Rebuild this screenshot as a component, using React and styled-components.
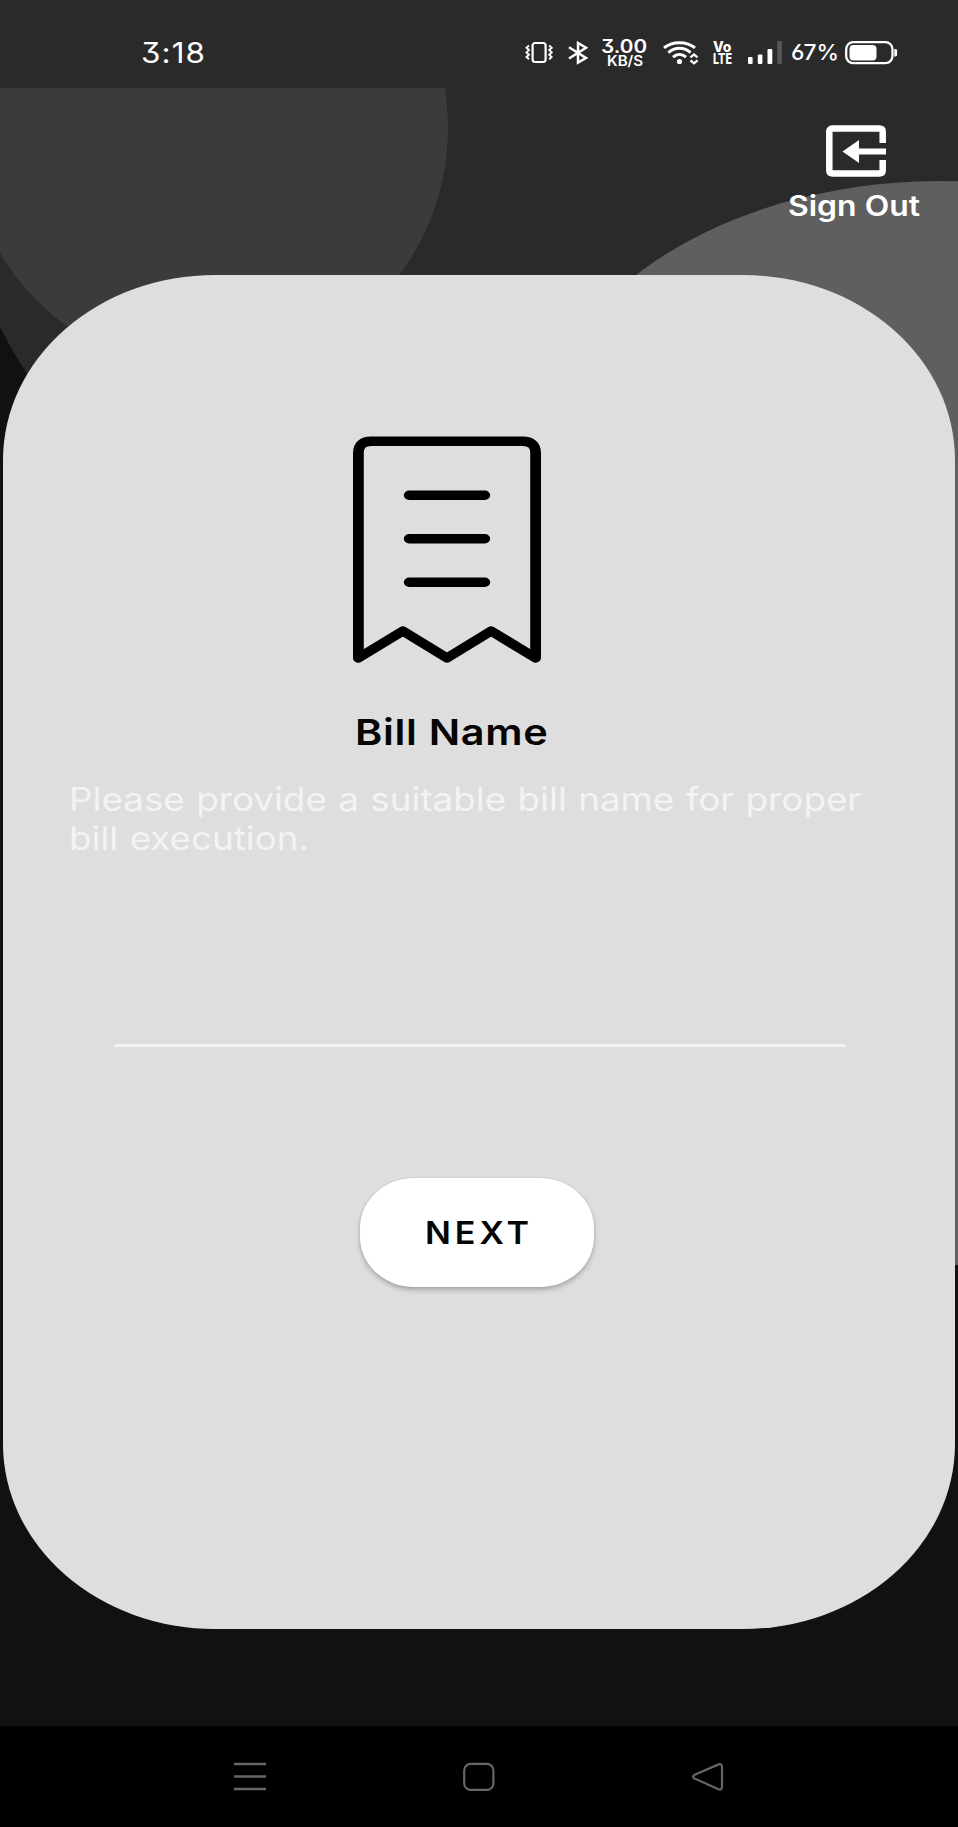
import React from "react";
import styled, { createGlobalStyle } from "styled-components";

const GlobalStyle = createGlobalStyle`
  * { box-sizing: border-box; }
  body { margin: 0; background: #111; }
`;

const Screen = styled.div`
  position: relative;
  display: flex;
  flex-direction: column;
  width: 958px;
  height: 1827px;
  overflow: hidden;
  background: #111111;
  font-family: Inter, "Liberation Sans", sans-serif;
`;

const Backdrop = styled.svg`
  position: absolute;
  inset: 0;
`;

const StatusBar = styled.header`
  position: relative;
  display: flex;
  align-items: flex-start;
  height: 87.5px;
  padding: 41px 0 0 140.5px;
  background: #2a2a2a;
  color: #fff;
  font-feature-settings: "cv09", "cv03";
`;

const Wide = styled.span`
  display: block;
  width: max-content;
  white-space: nowrap;
  transform: scaleX(${(p) => p.$x || 1.15});
  transform-origin: left;
`;

const Slot = styled.div`
  flex: none;
  width: ${(p) => p.$w}px;
  height: 24px;
  svg { display: block; }
`;

const Clock = styled(Wide)`
  font-size: 28px;
  line-height: 24px;
  letter-spacing: 1px;
`;

const SpeedValue = styled(Wide)`
  margin-top: -3px;
  font-size: 18.5px;
  font-weight: 600;
  line-height: 16px;
`;

const SpeedUnit = styled(Wide)`
  margin-left: 5.5px;
  font-size: 14px;
  font-weight: 600;
  line-height: 12px;
  margin-top: 1px;
`;

const NetTag = styled(Wide)`
  font-size: 14.5px;
  font-weight: 800;
  line-height: 12px;
`;

const BatteryText = styled(Wide)`
  font-size: 22px;
  font-weight: 500;
  line-height: 23px;
`;

const Main = styled.main`
  position: relative;
  flex: 1;
  display: flex;
  flex-direction: column;
`;

const SignOut = styled.button`
  display: flex;
  flex-direction: column;
  align-items: flex-start;
  justify-content: flex-start;
  align-self: flex-end;
  width: 170px;
  height: 187.5px;
  padding: 37.5px 0 0;
  border: 0;
  background: none;
  color: #fff;
  font: 600 28px/34px Inter, "Liberation Sans", sans-serif;
  svg { display: block; flex: none; margin: 0 0 12px 38px; }
`;

const Card = styled.section`
  display: flex;
  flex-direction: column;
  width: 952px;
  height: 1354px;
  margin-left: 3px;
  padding-top: 161px;
  border-radius: 212px / 185px;
  background: #dedede;
`;

const Receipt = styled.svg`
  display: block;
  flex: none;
  margin-left: 350px;
`;

const Title = styled.h1`
  margin: 47px 0 0 352px;
  color: #050505;
  font-size: 36px;
  font-weight: 600;
  line-height: 44px;
  letter-spacing: 0.6px;
`;

const Hint = styled.p`
  height: 78px;
  margin: 26px 0 0 66px;
  color: #f3f3f3;
  font-size: 32px;
  line-height: 39px;
  word-spacing: 0.9px;
`;

const NameInput = styled.input`
  width: 732px;
  height: 121px;
  margin: 68px 0 0 111px;
  border: 0;
  border-bottom: 3px solid #f3f3f3;
  outline: 0;
  background: transparent;
  font: 32px Inter, sans-serif;
`;

const NextButton = styled.button`
  width: 234px;
  height: 109px;
  margin: 131px 0 0 357px;
  padding: 1px 0 0 65px;
  border: 0;
  border-radius: 54px / 50px;
  background: #fff;
  color: #050505;
  box-shadow: 0 3px 5px rgba(0, 0, 0, 0.24), 0 0 2px rgba(0, 0, 0, 0.1);
  font: 600 31px/38px Inter, sans-serif;
  letter-spacing: 3.6px;
`;

const NavBar = styled.nav`
  position: relative;
  display: flex;
  height: 101px;
  padding: 35px 0 0 233px;
  gap: 196px;
  background: #000;
  svg { flex: none; }
`;

function VibrateIcon() {
  return (
    <svg width="28" height="23" viewBox="0 0 28 23" fill="none" stroke="#fff" strokeWidth="2.2">
      <rect x="7.6" y="2" width="13" height="19" rx="2.5" />
      <path d="M4 4.5 1.5 6.8 4 9.1 1.5 11.4 4 13.7 1.5 16 4 18.3M24.2 4.5 26.7 6.8 24.2 9.1 26.7 11.4 24.2 13.7 26.7 16 24.2 18.3" strokeWidth="1.9" />
    </svg>
  );
}

function BluetoothIcon() {
  return (
    <svg width="20" height="24" viewBox="0 0 20 24" fill="none" stroke="#fff" strokeWidth="2.5">
      <path d="M1 6.2 18 17 10 21.6V2L18 6.8 1 17.5" />
    </svg>
  );
}

function WifiIcon() {
  return (
    <svg width="36" height="24" viewBox="0 0 36 24" fill="none" stroke="#fff" strokeWidth="3">
      <path d="M1 6.9C9 -.1 24 -.1 32 6.9M5.4 11.7C11.5 5.9 21.5 5.9 27.6 11.7M10 16.2C14 12.5 19 12.5 23 16.2" />
      <circle cx="16.5" cy="20.5" r="2.6" fill="#fff" stroke="none" />
      <path d="M27.5 16.4 31 13.4 34.5 16.4M27.5 19.3 31 22.3 34.5 19.3" strokeWidth="2.3" />
    </svg>
  );
}

function SignalIcon() {
  return (
    <svg width="34" height="24" viewBox="0 0 34 24" fill="#fff">
      <rect x="0" y="16" width="4.6" height="7" rx="1" />
      <rect x="9.8" y="13.5" width="4.6" height="9.5" rx="1" />
      <rect x="19.5" y="8" width="4.8" height="15" rx="1" />
      <rect x="29.2" y="0" width="4.8" height="23" rx="1" fill="#555" />
    </svg>
  );
}

function BatteryIcon() {
  return (
    <svg width="53" height="24" viewBox="0 0 53 24">
      <rect x="1.2" y="1.2" width="46.3" height="21" rx="7" fill="none" stroke="#fff" strokeWidth="2.3" />
      <rect x="4.5" y="4" width="27" height="15.5" rx="4" fill="#fff" />
      <path d="M49.3 8h1.2q1.6 0 1.6 1.6v4.2q0 1.6-1.6 1.6h-1.2z" fill="#fff" />
    </svg>
  );
}

export default function App() {
  return (
    <Screen>
      <GlobalStyle />
      <Backdrop width="958" height="1827" viewBox="0 0 958 1827">
        <path d="M0 0H958V600H240Q90 500 26 372Q12 351 0 327Z" fill="#2a2a2a" />
        <ellipse cx="207" cy="128.5" rx="241" ry="243" fill="#3b3b3b" />
        <path d="M532 463A408 282 0 0 1 958 181.3V1265H532Z" fill="#5f5f5f" />
      </Backdrop>

      <StatusBar>
        <Slot $w={384.5}><Clock $x={1.12}>3:18</Clock></Slot>
        <Slot $w={43}><VibrateIcon /></Slot>
        <Slot $w={33}><BluetoothIcon /></Slot>
        <Slot $w={62}>
          <SpeedValue $x={1.12}>3.00</SpeedValue>
          <SpeedUnit $x={1.08}>KB/S</SpeedUnit>
        </Slot>
        <Slot $w={49.5}><WifiIcon /></Slot>
        <Slot $w={35}>
          <NetTag $x={0.96}>Vo</NetTag>
          <NetTag $x={0.74}>LTE</NetTag>
        </Slot>
        <Slot $w={43}><SignalIcon /></Slot>
        <Slot $w={54.5}><BatteryText $x={1.03}>67%</BatteryText></Slot>
        <Slot $w={53}><BatteryIcon /></Slot>
      </StatusBar>

      <Main>
        <SignOut>
          <svg width="60" height="52" viewBox="0 0 60 52">
            <path d="M56.7 18V6.5Q56.7 3.5 53 3.5H7Q3.3 3.5 3.3 6.5V45.5Q3.3 48.5 7 48.5H53Q56.7 48.5 56.7 45.5V35" fill="none" stroke="#fff" strokeWidth="6.5" />
            <path d="M16.5 26.5 33 15V23.5H60V29.5H33V38Z" fill="#fff" />
          </svg>
          <Wide $x={1.14}>Sign Out</Wide>
        </SignOut>

        <Card>
          <Receipt width="188" height="227" viewBox="0 0 164 227" preserveAspectRatio="none" fill="none" stroke="#000" strokeWidth="9.4" strokeLinecap="round" strokeLinejoin="round">
            <path d="M4.7 222V17Q4.7 5.2 16 5.2H148Q159.3 5.2 159.3 17V222L120.5 195 82 222 43.5 195Z" />
            <path d="M49 59.3H115M49 102.7H115M49 146.2H115" />
          </Receipt>
          <Title><Wide>Bill Name</Wide></Title>
          <Hint>
            <Wide>Please provide a suitable bill name for proper</Wide>
            <Wide>bill execution.</Wide>
          </Hint>
          <NameInput aria-label="Bill Name" />
          <NextButton><Wide $x={1.1}>NEXT</Wide></NextButton>
        </Card>
      </Main>

      <NavBar>
        <svg width="34" height="32" viewBox="0 0 34 32" stroke="#666" strokeWidth="2.3">
          <path d="M1 3H33M1 15.5H33M1 28H33" />
        </svg>
        <svg width="32" height="32" viewBox="0 0 32 32" fill="none" stroke="#666" strokeWidth="2.2">
          <rect x="1.2" y="2.9" width="29.2" height="26" rx="6.5" />
        </svg>
        <svg width="34" height="32" viewBox="0 0 34 32" fill="none" stroke="#666" strokeWidth="2.2">
          <path d="M3.2 14.1 27.5 3.4Q31 2.3 31 6.1V25.6Q31 29.5 27.5 28.3L3.2 17.4Q1 15.7 3.2 14.1Z" />
        </svg>
      </NavBar>
    </Screen>
  );
}
